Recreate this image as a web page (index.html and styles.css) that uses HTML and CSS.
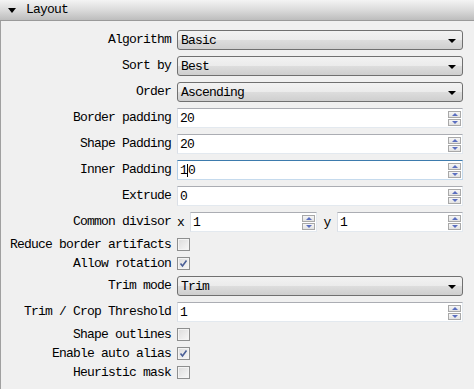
FILE: index.html
```html
<!DOCTYPE html>
<html>
<head>
<meta charset="utf-8">
<link rel="stylesheet" href="styles.css">
</head>
<body>
<div class="panel">
  <div class="header"><span class="tri"></span><span class="title">Layout</span></div>
  <div class="form">
    <div class="lbl">Algorithm</div>
    <div class="combo"><span>Basic</span><i class="arrow"></i></div>

    <div class="lbl">Sort by</div>
    <div class="combo"><span>Best</span><i class="arrow"></i></div>

    <div class="lbl">Order</div>
    <div class="combo"><span>Ascending</span><i class="arrow"></i></div>

    <div class="lbl">Border padding</div>
    <div class="spin"><span class="val">20</span><div class="btns"><b class="up"></b><b class="dn"></b></div></div>

    <div class="lbl">Shape Padding</div>
    <div class="spin"><span class="val">20</span><div class="btns"><b class="up"></b><b class="dn"></b></div></div>

    <div class="lbl">Inner Padding</div>
    <div class="spin focus"><span class="val">1<span class="caret"></span>0</span><div class="btns"><b class="up"></b><b class="dn"></b></div></div>

    <div class="lbl">Extrude</div>
    <div class="spin"><span class="val">0</span><div class="btns"><b class="up"></b><b class="dn"></b></div></div>

    <div class="lbl">Common divisor</div>
    <div class="pair">
      <span class="axis">x</span>
      <div class="spin"><span class="val">1</span><div class="btns"><b class="up"></b><b class="dn"></b></div></div>
      <span class="axis">y</span>
      <div class="spin"><span class="val">1</span><div class="btns"><b class="up"></b><b class="dn"></b></div></div>
    </div>

    <div class="lbl cbl">Reduce border artifacts</div>
    <div class="cbrow"><span class="cb"></span></div>

    <div class="lbl cbl">Allow rotation</div>
    <div class="cbrow"><span class="cb on"><svg viewBox="0 0 9 9" width="9" height="9"><path d="M1.5 4.5 L3.5 7 L7.5 1.5" fill="none" stroke="#4a5f97" stroke-width="1.6"/></svg></span></div>

    <div class="lbl">Trim mode</div>
    <div class="combo"><span>Trim</span><i class="arrow"></i></div>

    <div class="lbl">Trim / Crop Threshold</div>
    <div class="spin"><span class="val">1</span><div class="btns"><b class="up"></b><b class="dn"></b></div></div>

    <div class="lbl cbl">Shape outlines</div>
    <div class="cbrow"><span class="cb"></span></div>

    <div class="lbl cbl">Enable auto alias</div>
    <div class="cbrow"><span class="cb on"><svg viewBox="0 0 9 9" width="9" height="9"><path d="M1.5 4.5 L3.5 7 L7.5 1.5" fill="none" stroke="#4a5f97" stroke-width="1.6"/></svg></span></div>

    <div class="lbl cbl">Heuristic mask</div>
    <div class="cbrow"><span class="cb"></span></div>
  </div>
</div>
</body>
</html>
```

FILE: styles.css
```css
html, body {
  margin: 0;
  padding: 0;
  background: #f0f0f0;
}
body {
  font-family: "Liberation Mono", "DejaVu Sans Mono", monospace;
  font-size: 13px;
  letter-spacing: -0.8px;
  color: #000;
}
.panel {
  width: 474px;
  height: 389px;
  box-sizing: border-box;
  border-left: 1px solid #a0a0a0;
}
.header {
  height: 21px;
  box-sizing: border-box;
  border-bottom: 1px solid #9a9a9a;
  background: linear-gradient(#f4f4f4, #d8d8d8 55%, #bdbdbd);
  display: flex;
  align-items: center;
  padding-left: 8px;
  margin-left: -1px;
}
.tri {
  width: 0;
  height: 0;
  border-left: 4px solid transparent;
  border-right: 4px solid transparent;
  border-top: 5px solid #000;
  margin-right: 10px;
}
.title {
  line-height: 20px;
}
.form {
  display: grid;
  grid-template-columns: 170px 286px;
  column-gap: 6px;
  row-gap: 6px;
  padding-top: 9px;
  align-items: center;
}
.lbl {
  text-align: right;
  white-space: nowrap;
  line-height: 20px;
}
.lbl.cbl {
  line-height: 13px;
}
.combo {
  height: 20px;
  box-sizing: border-box;
  border: 1px solid #707070;
  border-radius: 3px;
  background: linear-gradient(#f2f2f2, #ebebeb 50%, #dddddd 50%, #cfcfcf);
  display: flex;
  align-items: center;
  justify-content: space-between;
  padding: 0 6px 0 3px;
}
.arrow {
  width: 0;
  height: 0;
  border-left: 4px solid transparent;
  border-right: 4px solid transparent;
  border-top: 4px solid #000;
  margin-top: 1px;
}
.spin {
  height: 20px;
  box-sizing: border-box;
  background: #fff;
  border: 1px solid #e3e9ef;
  border-top-color: #abadb3;
  border-left-color: #dbdfe6;
  display: flex;
  align-items: center;
  justify-content: space-between;
  padding: 0 1px 0 2px;
}
.spin.focus {
  border-color: #c5daed;
  border-top-color: #3d7bad;
  border-left-color: #b5cfe7;
}
.val {
  display: flex;
  align-items: center;
}
.caret {
  width: 1px;
  height: 13px;
  background: #000;
}
.btns {
  display: flex;
  flex-direction: column;
  gap: 1px;
}
.btns b {
  width: 13px;
  height: 7px;
  box-sizing: border-box;
  border: 1px solid #a8a8a8;
  background: linear-gradient(#f6f6f6, #e2e2e2);
  display: flex;
  align-items: center;
  justify-content: center;
}
.btns b::after {
  content: "";
  width: 0;
  height: 0;
  border-left: 3px solid transparent;
  border-right: 3px solid transparent;
}
.btns b.up::after {
  border-bottom: 3px solid #5a6ec0;
}
.btns b.dn::after {
  border-top: 3px solid #5a6ec0;
}
.pair {
  display: grid;
  grid-template-columns: 13px 127px 20px 126px;
  align-items: center;
}
.pair .axis {
  text-align: center;
}
.pair .axis:first-child {
  text-align: left;
}
.cbrow {
  height: 13px;
  display: flex;
  align-items: center;
}
.cb {
  width: 13px;
  height: 13px;
  box-sizing: border-box;
  border: 1px solid #8e8f8f;
  background: linear-gradient(135deg, #dcdcdc, #f8f8f8);
  display: flex;
  align-items: center;
  justify-content: center;
  box-shadow: inset 0 0 0 1px #f4f4f4;
}
```
